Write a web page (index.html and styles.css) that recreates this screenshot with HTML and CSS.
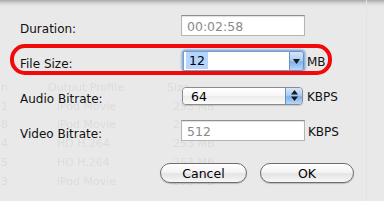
FILE: index.html
```html
<!DOCTYPE html>
<html>
<head>
<meta charset="utf-8">
<link rel="stylesheet" href="styles.css">
</head>
<body>
<div class="sheet">
  <div class="ghost" aria-hidden="true">
    <div class="ghost-row head"><span class="g-num">n</span><span class="g-name">Output Profile</span><span class="g-size">Size</span></div>
    <div class="ghost-row"><span class="g-num">1</span><span class="g-name">iPod Movie</span><span class="g-size">253 MB</span></div>
    <div class="ghost-row"><span class="g-num">8</span><span class="g-name">iPod Movie</span><span class="g-size">253 MB</span></div>
    <div class="ghost-row"><span class="g-num">4</span><span class="g-name">HD H.264</span><span class="g-size">253 MB</span></div>
    <div class="ghost-row"><span class="g-num">5</span><span class="g-name">HD H.264</span><span class="g-size">253 MB</span></div>
    <div class="ghost-row"><span class="g-num">3</span><span class="g-name">iPod Movie</span><span class="g-size">253 MB</span></div>
  </div>

  <div class="form">
    <div class="row">
      <div class="label">Duration:</div>
      <div class="field disabled">00:02:58</div>
    </div>
    <div class="row">
      <div class="label">File Size:</div>
      <div class="combo">
        <div class="combo-text"><span class="sel">12</span></div>
        <div class="combo-btn"><svg width="7" height="5" viewBox="0 0 7 5"><path d="M0 0h7L3.5 5z" fill="#1a1a1a"/></svg></div>
      </div>
      <div class="unit">MB</div>
    </div>
    <div class="row">
      <div class="label">Audio Bitrate:</div>
      <div class="popup">
        <div class="popup-text">64</div>
        <div class="popup-btn"><svg width="7" height="11" viewBox="0 0 7 11"><path d="M0 4.5h7L3.5 0z M0 6.5h7L3.5 11z" fill="#1a1a1a"/></svg></div>
      </div>
      <div class="unit">KBPS</div>
    </div>
    <div class="row">
      <div class="label">Video Bitrate:</div>
      <div class="field disabled">512</div>
      <div class="unit">KBPS</div>
    </div>
    <div class="buttons">
      <div class="btn cancel">Cancel</div>
      <div class="btn ok">OK</div>
    </div>
  </div>

  <div class="highlight"></div>
</div>
</body>
</html>
```

FILE: styles.css
```css
* { box-sizing: border-box; }
html, body { margin: 0; padding: 0; }
body {
  width: 384px;
  height: 201px;
  overflow: hidden;
  background: #e9e9e9;
  font-family: "DejaVu Sans", "Liberation Sans", sans-serif;
  font-size: 12px;
  color: #111;
}
.sheet {
  position: relative;
  width: 384px;
  height: 201px;
  background:
    linear-gradient(to right, transparent 0, transparent 366px, #e3e3e3 366px, #e3e3e3 367px, transparent 367px),
    linear-gradient(to bottom, #a9a9a9 0px, #c4c4c4 2px, #dcdcdc 4px, #e6e6e6 6px, #e9e9e9 9px);
}

.ghost {
  position: absolute;
  left: 0;
  top: 78px;
  width: 260px;
  filter: blur(0.6px);
  color: #dcdcdc;
  font-size: 11px;
}
.ghost-row {
  display: flex;
  height: 18.8px;
  align-items: center;
}
.g-num { width: 57px; padding-left: 1px; }
.g-name { width: 116px; }
.g-size { width: 80px; }
.head .g-num { width: 48px; }
.head .g-name { width: 119px; }

.form {
  position: relative;
  padding-top: 15px;
  display: flex;
  flex-direction: column;
  gap: 14px;
}
.row {
  display: flex;
  align-items: center;
  height: 21px;
}
.label {
  width: 181px;
  padding-left: 20px;
  padding-top: 6px;
  font-size: 12px;
  color: #111;
}
.field {
  width: 124px;
  height: 21px;
  background: #fff;
  border: 1px solid #b4b4b4;
  border-top-color: #8e8e8e;
  box-shadow: inset 0 1px 1px rgba(0,0,0,0.12);
  padding-left: 5px;
  display: flex;
  align-items: center;
  font-size: 12.5px;
  padding-top: 2px;
}
.field.disabled { color: #8a8a8a; }
.unit {
  padding-left: 3px;
  padding-top: 3px;
  font-size: 12px;
  color: #111;
}

.combo {
  margin-left: 2px;
  width: 121px;
  height: 20px;
  display: flex;
  border-radius: 3px;
  box-shadow: 0 0 0 1px #8fb4da, 0 0 2px 2px #9dc0e6;
}
.combo-text {
  flex: 1;
  background: #fff;
  border: 1px solid #7b9cc4;
  border-right: none;
  display: flex;
  align-items: center;
  padding-left: 2px;
  font-size: 12.5px;
  color: #000;
}
.sel {
  background: #b5d5ff;
  padding: 2px 3px 1px 3px;
  line-height: 14px;
}
.combo-btn {
  width: 15px;
  border: 1px solid #6c8fbd;
  border-radius: 0 3px 3px 0;
  background: linear-gradient(to bottom, #d6e7fb 0%, #a9cdf3 45%, #7fb2ea 55%, #b4d8fb 100%);
  display: flex;
  align-items: center;
  justify-content: center;
  padding-top: 1px;
}
.combo + .unit { padding-left: 3px; }

.popup {
  margin-left: 1px;
  width: 121px;
  height: 18px;
  display: flex;
  border: 1px solid #8c8c8c;
  border-radius: 4px;
  overflow: hidden;
  box-shadow: 0 1px 1px rgba(0,0,0,0.15);
}
.popup-text {
  flex: 1;
  background: linear-gradient(to bottom, #ffffff 0%, #f6f6f6 50%, #ececec 51%, #fbfbfb 100%);
  padding-left: 8px;
  display: flex;
  align-items: center;
  font-size: 12.5px;
  color: #000;
  padding-top: 1px;
}
.popup-btn {
  width: 17px;
  border-left: 1px solid #6c8fbd;
  background: linear-gradient(to bottom, #d6e7fb 0%, #a9cdf3 45%, #7fb2ea 55%, #b4d8fb 100%);
  display: flex;
  align-items: center;
  justify-content: center;
}
.popup + .unit { padding-left: 4px; }

.buttons {
  margin-top: 8px;
  display: flex;
  padding-left: 160px;
  gap: 13px;
}
.btn {
  height: 20px;
  border: 1px solid #6e6e6e;
  border-radius: 10px;
  background: linear-gradient(to bottom, #ffffff 0%, #f4f4f4 45%, #e4e4e4 55%, #f7f7f7 100%);
  box-shadow: 0 1px 1px rgba(0,0,0,0.2);
  display: flex;
  align-items: center;
  justify-content: center;
  font-size: 12.5px;
  color: #000;
  padding-top: 1px;
}
.cancel { width: 87px; }
.ok { width: 94px; }

.highlight {
  position: absolute;
  left: 10px;
  top: 44px;
  width: 322px;
  height: 31px;
  border: 4px solid #f00a0a;
  border-radius: 15px;
}
```
